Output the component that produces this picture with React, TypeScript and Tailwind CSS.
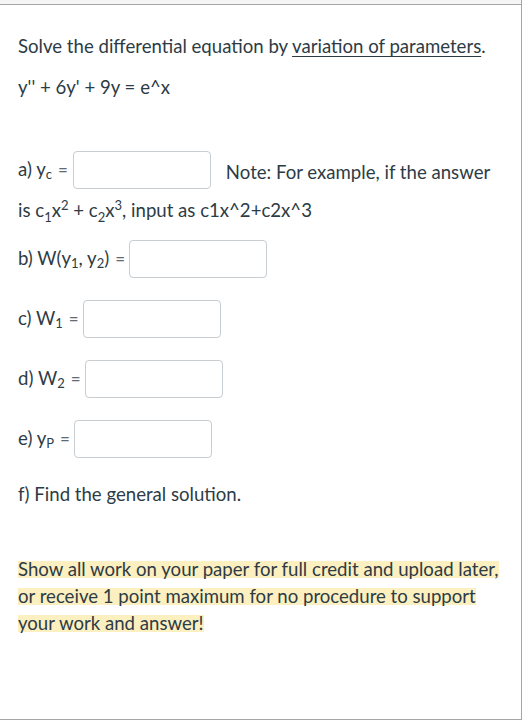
import React from 'react';

function AnswerBox({ className = '' }: { className?: string }) {
  return (
    <span
      className={`inline-block h-[38px] w-[138px] rounded-[4px] border border-[#c7cdd1] bg-white ${className}`}
    />
  );
}

function Sub({ children }: { children: React.ReactNode }) {
  return <span className="relative top-[5px] text-[13px]">{children}</span>;
}

function Sup({ children }: { children: React.ReactNode }) {
  return <span className="relative top-[-7px] text-[13px]">{children}</span>;
}

function Eq() {
  return <span className="mr-[4px] ml-[6px] text-[17px] text-[#606a72]">=</span>;
}

export default function App() {
  return (
    <div className="min-h-[723px] bg-white font-['Lato','Liberation_Sans',sans-serif] text-[18.6px] text-[#2d3b45]">
      <div className="flex h-[720px] w-[522px] flex-col border-r border-b border-[#a5a5a5]">
        <div className="h-[5px] shrink-0 border-b border-[#a5a5a5] bg-[#f5f5f5]" />

        <div className="flex flex-col px-[18px]">
          <p className="mt-[29px] leading-[24px]">
            Solve the differential equation by{' '}
            <span className="underline underline-offset-[3px]">variation of parameters</span>.
          </p>
          <p className="mt-[17px] leading-[24px]">y'' + 6y' + 9y = e^x</p>

          <div className="mt-[52px] flex h-[38px] items-center">
            <span>a) y</span>
            <Sub>c</Sub>
            <Eq />
            <AnswerBox className="ml-[1px]" />
            <span className="relative top-[3px] ml-[15px]">Note: For example, if the answer</span>
          </div>
          <p className="mt-[9px] leading-[24px]">
            is c<Sub>1</Sub>x<Sup>2</Sup> + c<Sub>2</Sub>x<Sup>3</Sup>, input as c1x^2+c2x^3
          </p>

          <div className="mt-[16px] flex h-[38px] items-center">
            <span>b) W(y</span>
            <Sub>1</Sub>
            <span>, y</span>
            <Sub>2</Sub>
            <span>)</span>
            <Eq />
            <AnswerBox />
          </div>

          <div className="mt-[22px] flex h-[38px] items-center">
            <span>c) W</span>
            <Sub>1</Sub>
            <Eq />
            <AnswerBox />
          </div>

          <div className="mt-[22px] flex h-[38px] items-center">
            <span>d) W</span>
            <Sub>2</Sub>
            <Eq />
            <AnswerBox />
          </div>

          <div className="mt-[22px] flex h-[38px] items-center">
            <span>e) y</span>
            <Sub>P</Sub>
            <Eq />
            <AnswerBox />
          </div>

          <p className="mt-[24px] leading-[24px]">f) Find the general solution.</p>

          <div className="mt-[55px] flex flex-col items-start gap-[10px]">
            <span className="inline-block h-[17px] bg-[#fcefc0] leading-[17px]">
              Show all work on your paper for full credit and upload later,
            </span>
            <span className="inline-block h-[17px] bg-[#fcefc0] leading-[17px]">
              or receive 1 point maximum for no procedure to support
            </span>
            <span className="inline-block h-[17px] bg-[#fcefc0] leading-[17px]">
              your work and answer!
            </span>
          </div>
        </div>
      </div>
    </div>
  );
}
